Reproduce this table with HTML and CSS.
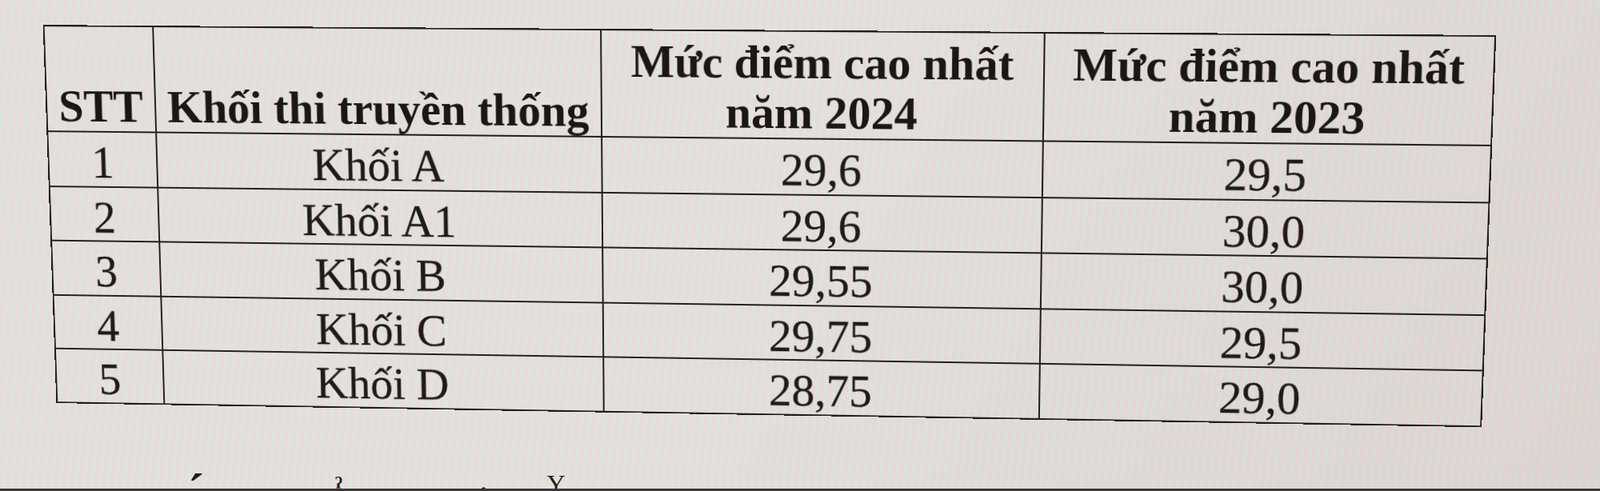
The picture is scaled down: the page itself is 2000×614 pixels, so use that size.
FILE: index.html
```html
<!DOCTYPE html>
<html lang="vi">
<head>
<meta charset="utf-8">
<title>Mức điểm cao nhất</title>
<link rel="stylesheet" href="styles.css">
</head>
<body>
<div class="page">
  <div class="stage">
    <table class="scores">
      <colgroup>
        <col class="c-stt">
        <col class="c-khoi">
        <col class="c-y24">
        <col class="c-y23">
      </colgroup>
      <thead>
        <tr>
          <th class="single">STT</th>
          <th class="single">Khối thi truyền thống</th>
          <th class="double">Mức điểm cao nhất<br>năm 2024</th>
          <th class="double">Mức điểm cao nhất<br>năm 2023</th>
        </tr>
      </thead>
      <tbody>
        <tr><td>1</td><td>Khối A</td><td>29,6</td><td>29,5</td></tr>
        <tr><td>2</td><td>Khối A1</td><td>29,6</td><td>30,0</td></tr>
        <tr><td>3</td><td>Khối B</td><td>29,55</td><td>30,0</td></tr>
        <tr><td>4</td><td>Khối C</td><td>29,75</td><td>29,5</td></tr>
        <tr><td>5</td><td>Khối D</td><td>28,75</td><td>29,0</td></tr>
      </tbody>
    </table>
  </div>
  <div class="tail">
    <span class="mark m1">´</span>
    <span class="mark m2">ˀ</span>
    <span class="mark m3">·</span>
    <span class="mark m4">Y</span>
  </div>
  <div class="strip"></div>
</div>
</body>
</html>
```

FILE: styles.css
```css
html, body {
  margin: 0;
  padding: 0;
}

body {
  width: 2000px;
  height: 614px;
  overflow: hidden;
  font-family: "Liberation Serif", "Times New Roman", serif;
  color: #211d1b;
}

.page {
  height: 614px;
  display: flex;
  flex-direction: column;
  background:
    repeating-linear-gradient(96deg,
      rgba(236, 196, 206, 0.24) 0px,
      rgba(236, 196, 206, 0.24) 5px,
      rgba(196, 226, 206, 0.2) 5px,
      rgba(196, 226, 206, 0.2) 10px),
    linear-gradient(120deg, #e6e2df 0%, #e7e3e0 45%, #dbd6d2 100%);
}

.stage {
  flex: 1;
  padding: 39px 0 0 45px;
}

.scores {
  width: 1798px;
  table-layout: fixed;
  border-collapse: collapse;
  font-size: 57.5px;
  transform-origin: 50% 50%;
  transform: perspective(2000px) rotateX(-4.6deg) rotateY(-2.4deg) skewY(0.5deg);
}

.c-stt { width: 140px; }
.c-khoi { width: 566px; }
.c-y24 { width: 548px; }
.c-y23 { width: 544px; }

.scores th,
.scores td {
  border: 2px solid #221e1c;
  padding: 0;
  text-align: center;
  white-space: nowrap;
}

.scores thead tr { height: 131px; }
.scores tbody tr { height: 67.5px; }

.scores th {
  font-weight: 700;
  color: #1b1715;
  line-height: 62px;
}

.scores th.single {
  vertical-align: bottom;
}

.scores th.double {
  vertical-align: top;
  padding-top: 7px;
}

.scores td {
  font-weight: 400;
  vertical-align: top;
  padding-top: 8px;
  line-height: 59.5px;
  height: 59.5px;
  color: #1f1b19;
  -webkit-text-stroke: 0.3px #1f1b19;
}

.tail {
  height: 21px;
  overflow: hidden;
  display: flex;
  align-items: flex-start;
  font-weight: 700;
  color: #1f1b19;
}

.mark {
  display: block;
}

.m1 { font-size: 60px; margin-left: 235px; line-height: 50px; margin-top: -2px; }
.m2 { font-size: 34px; margin-left: 164px; line-height: 30px; margin-top: 4px; }
.m3 { font-size: 30px; margin-left: 172px; line-height: 30px; margin-top: 6px; }
.m4 { font-size: 32px; margin-left: 74px; line-height: 30px; margin-top: 0px; font-weight: 400; }

.strip {
  height: 3px;
  background: #3a3736;
}
```
